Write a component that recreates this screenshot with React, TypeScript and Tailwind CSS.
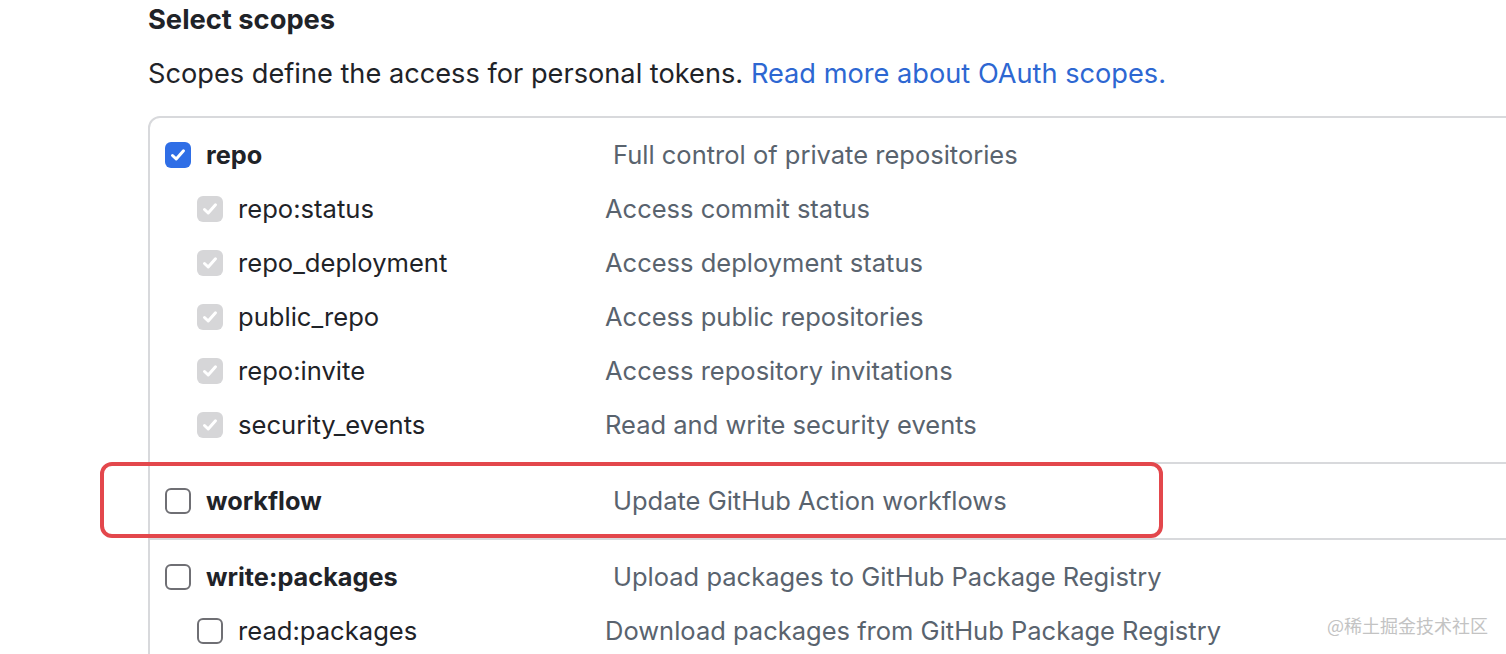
import React from "react";

type Sub = { name: string; desc: string; checked: boolean; disabled?: boolean };

function Check({ state }: { state: "on" | "disabled" | "off" }) {
  if (state === "off") {
    return <div className="w-[26px] h-[26px] shrink-0 rounded-[6px] border-2 border-[#6f6f74] bg-white" />;
  }
  const bg = state === "on" ? "bg-[#2f6ee6]" : "bg-[#d6d6d8]";
  return (
    <div className={`w-[26px] h-[26px] shrink-0 rounded-[6px] ${bg} flex items-center justify-center`}>
      <svg width="18" height="18" viewBox="0 0 18 18" fill="none">
        <path d="M3.5 9.5 L7.2 13 L14.5 4.8" stroke="white" strokeWidth="3" strokeLinecap="round" strokeLinejoin="round" />
      </svg>
    </div>
  );
}

function MainRow({ name, desc, state }: { name: string; desc: string; state: "on" | "off" }) {
  return (
    <div className="h-[54px] flex items-center pl-[15px]">
      <Check state={state} />
      <div className="ml-[15px] w-[407px] font-bold text-[25.3px] text-[#1f2328]">{name}</div>
      <div className="text-[25.5px] text-[#59636e]">{desc}</div>
    </div>
  );
}

function SubRow({ s }: { s: Sub }) {
  return (
    <div className="h-[54px] flex items-center pl-[47px]">
      <Check state={s.disabled ? "disabled" : s.checked ? "on" : "off"} />
      <div className="ml-[15px] w-[367px] text-[25.6px] text-[#1f2328]">{s.name}</div>
      <div className="text-[25.5px] text-[#59636e]">{s.desc}</div>
    </div>
  );
}

const repoSubs: Sub[] = [
  { name: "repo:status", desc: "Access commit status", checked: true, disabled: true },
  { name: "repo_deployment", desc: "Access deployment status", checked: true, disabled: true },
  { name: "public_repo", desc: "Access public repositories", checked: true, disabled: true },
  { name: "repo:invite", desc: "Access repository invitations", checked: true, disabled: true },
  { name: "security_events", desc: "Read and write security events", checked: true, disabled: true },
];

export default function App() {
  return (
    <div className="w-[1506px] h-[654px] overflow-hidden bg-white relative text-[26px] font-['Inter',sans-serif] text-[#1f2328]">
      <div className="pl-[148px]">
        <h2 className="h-[40px] leading-[40px] font-bold text-[27.3px] text-[#1f2328]">Select scopes</h2>
        <p className="mt-[14px] h-[40px] leading-[40px] text-[27.2px] text-[#1f2328]">
          Scopes define the access for personal tokens.{" "}
          <a className="text-[#2d67d2]">Read more about OAuth scopes.</a>
        </p>
        <div className="mt-[22px] w-[1420px] border-2 border-[#d8d9dc] rounded-[12px] relative">
          <div className="py-[10px]">
            <MainRow name="repo" desc="Full control of private repositories" state="on" />
            {repoSubs.map((s) => (
              <SubRow key={s.name} s={s} />
            ))}
          </div>
          <div className="border-t-2 border-[#d8d9dc] py-[10px]">
            <MainRow name="workflow" desc="Update GitHub Action workflows" state="off" />
          </div>
          <div className="border-t-2 border-[#d8d9dc] py-[10px]">
            <MainRow name="write:packages" desc="Upload packages to GitHub Package Registry" state="off" />
            <SubRow s={{ name: "read:packages", desc: "Download packages from GitHub Package Registry", checked: false }} />
          </div>
          <div className="absolute left-[-50px] top-[344px] w-[1063px] h-[76px] border-4 border-[#e3474c] rounded-[12px] pointer-events-none" />
        </div>
      </div>
      <div className="absolute left-[1327px] top-[612px] text-[18px] text-[#c3c3c3] font-['Noto_Sans_CJK_SC',sans-serif] leading-[26px]">
        @稀土掘金技术社区
      </div>
    </div>
  );
}
